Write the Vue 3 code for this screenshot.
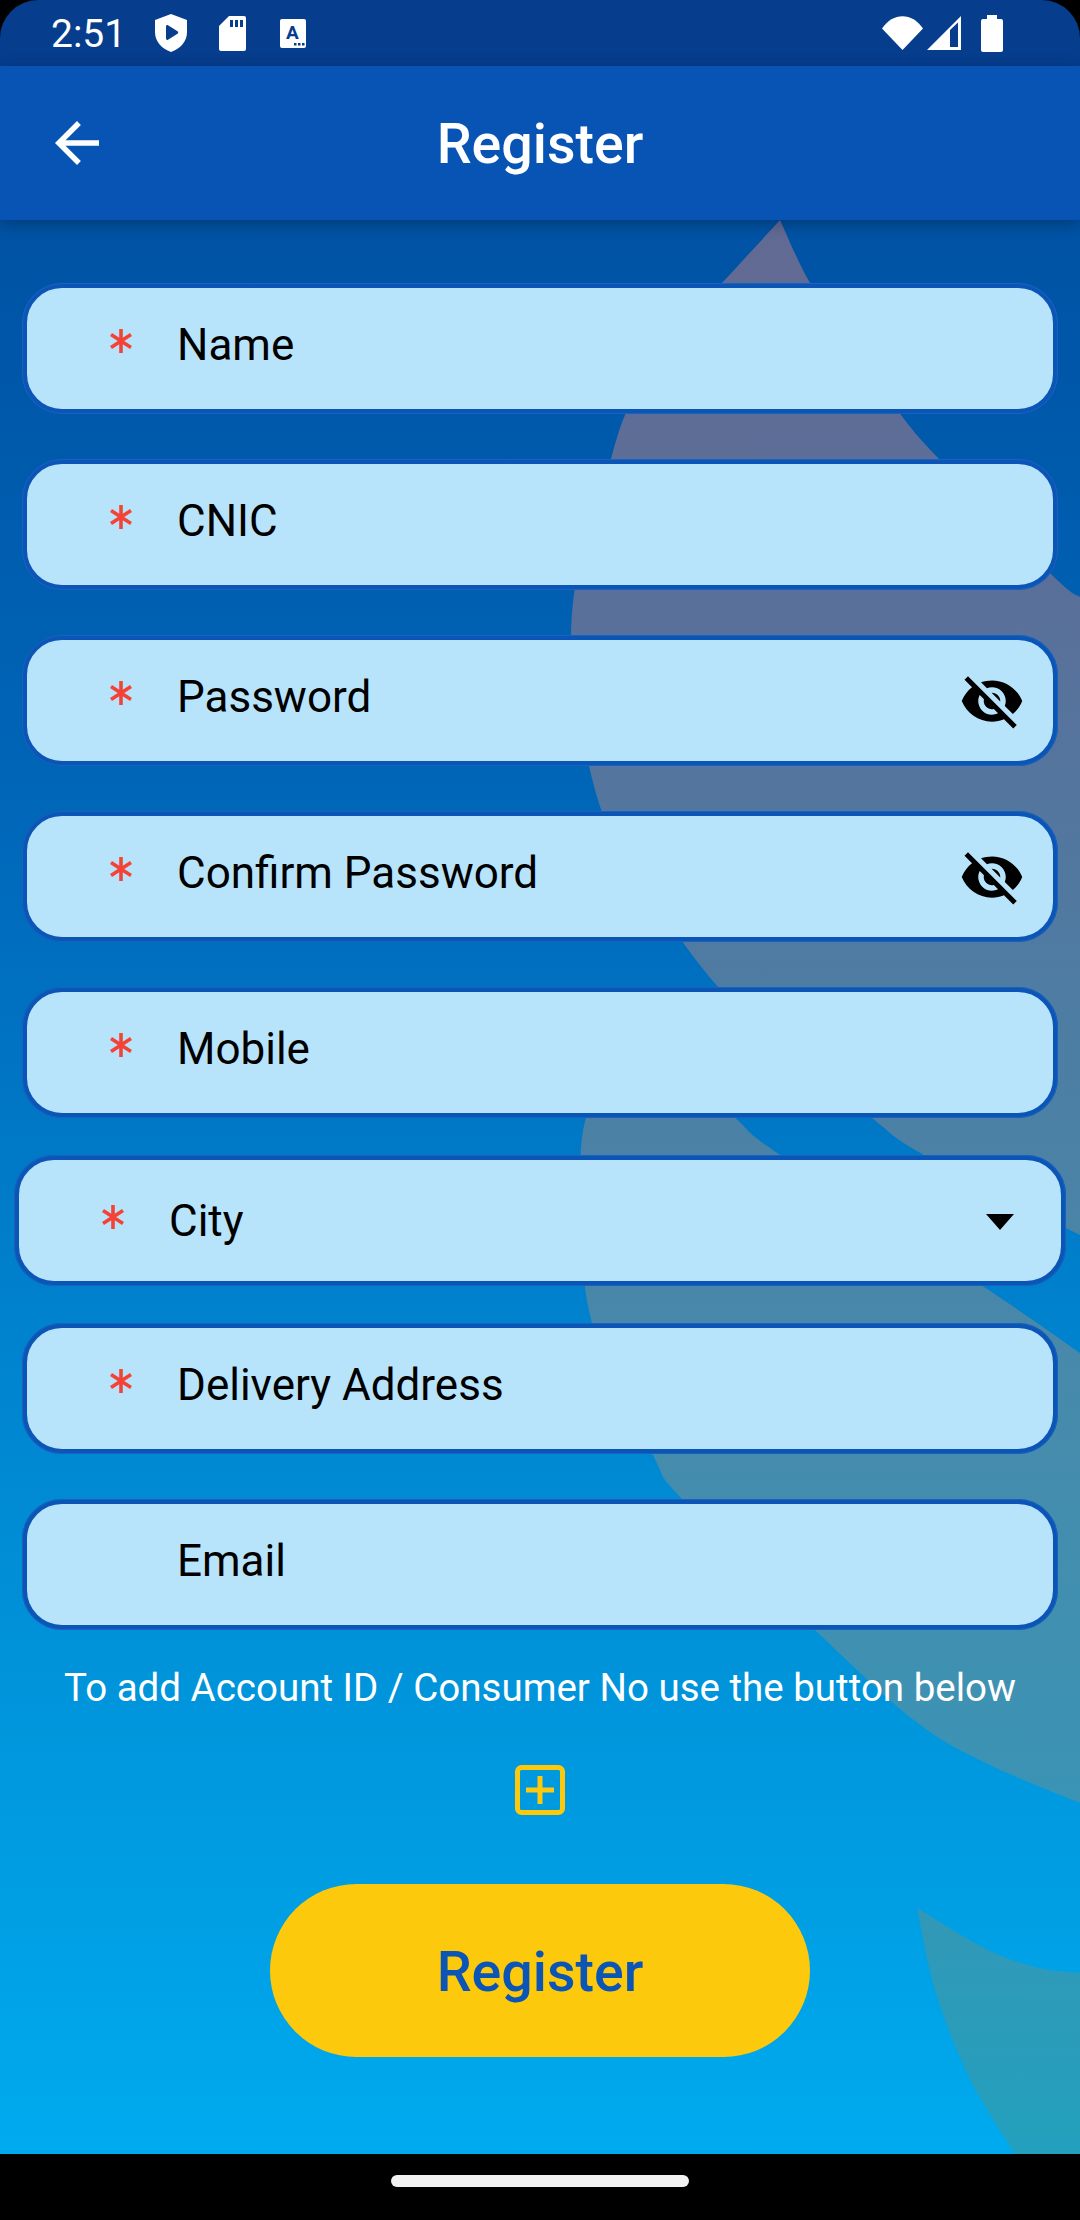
<template>
  <div class="screen">
    <div class="status-bar">
      <span class="time">2:51</span>
      <svg class="ic-shield" viewBox="0 0 32 38">
        <path d="M16 0l16 6v12c0 9.500-6.500 16.500-16 20C6.500 34.500 0 27.500 0 18V6z" fill="#fff" />
        <path d="M11 12.500c0-1.200 1-1.800 2-1.200l9.500 6c.9.600.9 1.900 0 2.500l-9.500 6c-1 .6-2-.1-2-1.200z" fill="#063d8d" />
      </svg>
      <svg class="ic-sd" viewBox="0 0 27 35">
        <path d="M10 0h15a2 2 0 0 1 2 2v31a2 2 0 0 1-2 2H2a2 2 0 0 1-2-2V10z" fill="#fff" />
        <path d="M11 4h3v7h-3zM16 4h3v7h-3zM21 4h3v7h-3z" fill="#063d8d" />
      </svg>
      <svg class="ic-a" viewBox="0 0 26 29">
        <rect width="26" height="29" rx="2" fill="#fff" />
        <text x="12.500" y="20" text-anchor="middle" class="ic-a-text">A</text>
        <path d="M14 24h2.500v2.500H14zM18 24h2.500v2.500H18zM22 24h2.500v2.500H22z" fill="#063d8d" />
      </svg>
      <div class="status-right">
        <svg class="ic-wifi" viewBox="0 0 41 34">
          <path d="M0 12.500C11-4 30-4 41 12.500L20.500 34z" fill="#fff" />
        </svg>
        <svg class="ic-signal" viewBox="0 0 34 34">
          <path d="M34 0v34H0z" fill="#fff" />
          <path d="M23 14l8-7.500V31h-8z" fill="#063d8d" />
        </svg>
        <svg class="ic-battery" viewBox="0 0 22 37">
          <path d="M6 0h10v4h4a2 2 0 0 1 2 2v29a2 2 0 0 1-2 2H2a2 2 0 0 1-2-2V6a2 2 0 0 1 2-2h4z" fill="#fff" />
        </svg>
      </div>
    </div>

    <header class="toolbar">
      <svg class="back" viewBox="0 0 24 24">
        <path d="M20 11H7.830l5.590-5.590L12 4l-8 8 8 8 1.410-1.410L7.830 13H20v-2z" fill="#fff" />
      </svg>
      <h1 class="title">Register</h1>
    </header>

    <main class="form">
      <svg class="blobs" viewBox="0 220 1080 1934" preserveAspectRatio="none">
        <defs>
          <linearGradient id="blobFill" gradientUnits="userSpaceOnUse" x1="0" y1="220" x2="0" y2="2154">
            <stop offset="0" stop-color="#626a93" />
            <stop offset="0.2" stop-color="#59709a" />
            <stop offset="0.42" stop-color="#4d7da3" />
            <stop offset="0.6" stop-color="#478aab" />
            <stop offset="0.8" stop-color="#3c93b4" />
            <stop offset="1" stop-color="#22a0bd" />
          </linearGradient>
        </defs>
        <path v-for="(d, i) in blobs" :key="i" :d="d" fill="url(#blobFill)" />
      </svg>

      <div
        v-for="field in fields"
        :key="field.label"
        class="field"
        :class="{ 'field--city': field.select }"
      >
        <svg v-if="field.required" class="star" viewBox="0 0 22 24">
          <path d="M11 0v24M1 5.500l20 13M21 5.500l-20 13" stroke="#f44336" stroke-width="3.600" fill="none" />
        </svg>
        <span class="label" :class="{ 'label--plain': !field.required }">{{ field.label }}</span>
        <svg v-if="field.secret" class="eye" viewBox="0 0 24 24">
          <path
            d="M12 7c2.760 0 5 2.240 5 5 0 .65-.13 1.260-.36 1.830l2.920 2.920c1.510-1.260 2.700-2.890 3.430-4.750-1.730-4.390-6-7.500-11-7.500-1.400 0-2.740.25-3.980.7l2.160 2.160C10.740 7.130 11.350 7 12 7zM2 4.270l2.280 2.280.46.46C3.080 8.300 1.780 10.020 1 12c1.730 4.390 6 7.500 11 7.500 1.550 0 3.030-.3 4.380-.84l.42.42L19.730 22 21 20.730 3.270 3 2 4.270zM7.530 9.800l1.550 1.550c-.05.21-.08.43-.08.65 0 1.660 1.340 3 3 3 .22 0 .44-.03.65-.08l1.550 1.550c-.67.33-1.410.53-2.200.53-2.760 0-5-2.240-5-5 0-.79.2-1.530.53-2.200zm4.310-.78l3.150 3.150.02-.16c0-1.660-1.340-3-3-3l-.17.01z"
            fill="#000"
          />
        </svg>
        <svg v-if="field.select" class="caret" viewBox="0 0 28 16">
          <path d="M0 0h28L14 16z" fill="#000" />
        </svg>
      </div>

      <p class="hint">To add Account ID / Consumer No use the button below</p>

      <svg class="add" viewBox="0 0 50 50">
        <rect x="2.500" y="2.500" width="45" height="45" rx="4" fill="none" stroke="#fdc90c" stroke-width="5" />
        <path d="M25 11v28M11 25h28" stroke="#fdc90c" stroke-width="5" fill="none" />
      </svg>

      <button class="submit">Register</button>
    </main>

    <div class="nav-bar">
      <span class="handle"></span>
    </div>
  </div>
</template>

<script setup>
const fields = [
  { label: 'Name', required: true },
  { label: 'CNIC', required: true },
  { label: 'Password', required: true, secret: true },
  { label: 'Confirm Password', required: true, secret: true },
  { label: 'Mobile', required: true },
  { label: 'City', required: true, select: true },
  { label: 'Delivery Address', required: true },
  { label: 'Email', required: false },
]

// catmull-rom through the points, gives the soft edges of the background
const spline = (pts) => {
  let d = ''
  for (let i = 0; i < pts.length - 1; i++) {
    const p0 = pts[i - 1] || pts[i]
    const p1 = pts[i]
    const p2 = pts[i + 1]
    const p3 = pts[i + 2] || p2
    const c1x = p1[0] + (p2[0] - p0[0]) / 6
    const c1y = p1[1] + (p2[1] - p0[1]) / 6
    const c2x = p2[0] - (p3[0] - p1[0]) / 6
    const c2y = p2[1] - (p3[1] - p1[1]) / 6
    d += ` C${c1x} ${c1y} ${c2x} ${c2y} ${p2[0]} ${p2[1]}`
  }
  return d
}

const blobs = [
  'M780 220' +
    spline([[780, 220], [722, 283], [660, 350], [625, 415], [605, 480], [580, 560], [571, 636], [578, 710], [602, 812], [640, 880], [719, 988], [800, 1058], [872, 1118], [924, 1155], [1080, 1235]]) +
    ' L1080 597' +
    spline([[1080, 597], [1053, 576], [939, 459], [901, 415], [855, 350], [810, 283], [780, 220]]) +
    ' Z',
  'M620 1070' +
    spline([[620, 1070], [586, 1118], [581, 1200], [592, 1323], [652, 1453], [683, 1500], [815, 1630], [915, 1721], [988, 1764], [1080, 1803]]) +
    ' L1080 1353' +
    spline([[1080, 1353], [984, 1287], [780, 1155], [735, 1118], [680, 1075], [620, 1070]]) +
    ' Z',
  'M917 1908' +
    spline([[917, 1908], [988, 1950], [1039, 1968], [1080, 1973]]) +
    ' L1080 2154 L1015 2154' +
    spline([[1015, 2154], [970, 2079], [936, 1993], [917, 1908]]) +
    ' Z',
]
</script>

<style scoped>
.screen {
  width: 1080px;
  height: 2220px;
  display: flex;
  flex-direction: column;
  background: #000;
  font-family: Roboto, sans-serif;
  overflow: hidden;
}

.status-bar {
  height: 66px;
  flex: none;
  display: flex;
  align-items: center;
  padding: 0 77px 0 51px;
  box-sizing: border-box;
  background: #063d8d;
  border-radius: 38px 38px 0 0;
}

.time {
  width: 104px;
  padding-top: 2px;
  font-size: 39px;
  color: #fff;
}

.ic-shield {
  width: 32px;
  height: 38px;
  margin-right: 32px;
}

.ic-sd {
  width: 27px;
  height: 35px;
  margin-right: 34px;
}

.ic-a {
  width: 26px;
  height: 29px;
}

.ic-a-text {
  font-family: Roboto, sans-serif;
  font-size: 19px;
  font-weight: 700;
  fill: #063d8d;
}

.status-right {
  margin-left: auto;
  display: flex;
  align-items: center;
}

.ic-wifi {
  width: 41px;
  height: 34px;
  margin-right: 4px;
}

.ic-signal {
  width: 34px;
  height: 34px;
  margin-right: 20px;
}

.ic-battery {
  width: 22px;
  height: 37px;
}

.toolbar {
  height: 154px;
  flex: none;
  position: relative;
  z-index: 2;
  display: flex;
  align-items: center;
  justify-content: center;
  background: #0854b4;
  box-shadow: 0 4px 14px rgba(0, 0, 0, 0.28);
}

.back {
  position: absolute;
  left: 44px;
  top: 44px;
  width: 66px;
  height: 66px;
}

.title {
  margin: 0;
  padding-top: 3px;
  font-size: 55.5px;
  font-weight: 500;
  color: #fff;
}

.form {
  flex: 1;
  position: relative;
  display: flex;
  flex-direction: column;
  align-items: center;
  padding-top: 63px;
  background: linear-gradient(180deg, #0052a4 0%, #0066b8 30%, #0080cc 55%, #0098de 80%, #00aaee 100%);
}

.blobs {
  position: absolute;
  left: 0;
  top: 0;
  width: 100%;
  height: 100%;
}

.field {
  position: relative;
  width: 1036px;
  height: 131px;
  flex: none;
  margin-bottom: 45px;
  padding: 31px 0 0 83px;
  box-sizing: border-box;
  display: flex;
  align-items: flex-start;
  background: #b8e4fb;
  border: 5px solid #0a55b5;
  border-radius: 40px;
  outline: 1px solid #1a62c0;
  outline-offset: -1px;
}

.field--city {
  width: 1052px;
  margin: -8px 0 37px;
  padding-top: 35px;
}

.star {
  width: 22px;
  height: 24px;
  margin: 10px 45px 0 0;
  flex: none;
}

.label {
  font-size: 44px;
  line-height: 52px;
  color: #000;
}

.label--plain {
  margin-left: 67px;
}

.eye {
  position: absolute;
  right: 28px;
  top: 28px;
  width: 66px;
  height: 66px;
}

.caret {
  position: absolute;
  right: 47px;
  top: 54px;
  width: 28px;
  height: 16px;
}

.hint {
  margin: -11px 0 0;
  position: relative;
  font-size: 38.5px;
  line-height: 48px;
  color: #fff;
}

.add {
  position: relative;
  width: 50px;
  height: 50px;
  margin-top: 53px;
  flex: none;
}

.submit {
  position: relative;
  width: 540px;
  height: 173px;
  margin-top: 69px;
  padding-top: 5px;
  flex: none;
  border: none;
  border-radius: 87px;
  background: #fdc90c;
  color: #0a55b5;
  font-family: Roboto, sans-serif;
  font-size: 55.5px;
  font-weight: 500;
}

.nav-bar {
  height: 66px;
  flex: none;
  display: flex;
  justify-content: center;
  padding-top: 21px;
  box-sizing: border-box;
  background: #000;
}

.handle {
  width: 298px;
  height: 12px;
  border-radius: 6px;
  background: #f2f2f2;
}
</style>
